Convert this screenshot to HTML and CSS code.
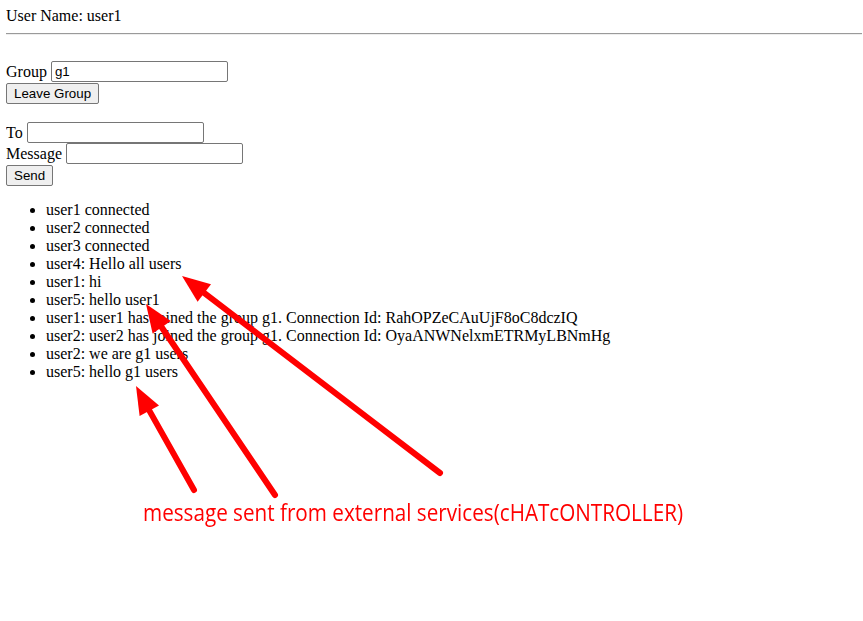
FILE: index.html
```html
<!DOCTYPE html>
<html>
<head>
<meta charset="utf-8">
<link rel="stylesheet" href="styles.css">
</head>
<body>
<div class="user">User Name: user1</div>
<hr class="rule">
<div class="section first">
  <div class="row"><span>Group</span><input class="field" type="text" value="g1"></div>
  <button class="btn">Leave Group</button>
</div>
<div class="section">
  <div class="row"><span>To</span><input class="field" type="text"></div>
  <div class="row"><span>Message</span><input class="field" type="text"></div>
  <button class="btn">Send</button>
</div>
<ul class="messages">
  <li>user1 connected</li>
  <li>user2 connected</li>
  <li>user3 connected</li>
  <li>user4: Hello all users</li>
  <li>user1: hi</li>
  <li>user5: hello user1</li>
  <li>user1: user1 has joined the group g1. Connection Id: RahOPZeCAuUjF8oC8dczIQ</li>
  <li>user2: user2 has joined the group g1. Connection Id: OyaANWNelxmETRMyLBNmHg</li>
  <li>user2: we are g1 users</li>
  <li>user5: hello g1 users</li>
</ul>
<svg class="annot" width="863" height="621" viewBox="0 0 863 621">
  <g stroke="#ff0000" stroke-width="6" stroke-linecap="round" fill="none">
    <line x1="440" y1="473" x2="199.5" y2="289.4"/>
    <line x1="275" y1="495" x2="158.3" y2="322.2"/>
    <line x1="194" y1="490" x2="146.4" y2="405.4"/>
  </g>
  <g fill="#ff0000">
    <polygon points="182,276 211,284.3 197.6,301.7"/>
    <polygon points="146,304 170.8,321 152.6,333.4"/>
    <polygon points="136,386 159,405.5 139.6,415.9"/>
  </g>
  <text class="note" x="143" y="521" textLength="540" lengthAdjust="spacingAndGlyphs">message sent from external services(cHATcONTROLLER)</text>
</svg>
</body>
</html>
```
FILE: styles.css
```css
html, body {
  background: #ffffff;
}
body {
  margin: 7px 1px 8px 6px;
  font-family: "Liberation Serif", "Times New Roman", serif;
  font-size: 16px;
  line-height: 18px;
  color: #000000;
}
.user {
  height: 18px;
}
.rule {
  margin: 8px 0;
  height: 0;
  border: 0;
  border-top: 1px solid #9a9a9a;
  border-bottom: 1px solid #eeeeee;
}
.section {
  margin-top: 18px;
}
.section.first {
  margin-top: 26px;
}
.row {
  display: flex;
  align-items: center;
  gap: 4px;
  height: 21px;
}
.field {
  box-sizing: border-box;
  width: 177px;
  height: 21px;
  margin: 0;
  padding: 1px 3px;
  border: 1px solid #767676;
  border-radius: 2px;
  font-family: "Liberation Sans", Arial, sans-serif;
  font-size: 13.33px;
  color: #000;
  background: #fff;
}
.btn {
  box-sizing: border-box;
  height: 21px;
  margin: 1px 0 0 0;
  padding: 1px 7px;
  border: 1px solid #767676;
  border-radius: 2px;
  background: #efefef;
  font-family: "Liberation Sans", Arial, sans-serif;
  font-size: 13.33px;
  color: #000;
  display: block;
}
.messages {
  margin: 15px 0 0 0;
  padding-left: 40px;
}
.messages li {
  height: 18px;
}
.annot {
  position: fixed;
  left: 0;
  top: 0;
  pointer-events: none;
  overflow: visible;
}
.note {
  font-family: "Open Sans", "Liberation Sans", sans-serif;
  font-size: 24px;
  fill: #ff0000;
}
```
